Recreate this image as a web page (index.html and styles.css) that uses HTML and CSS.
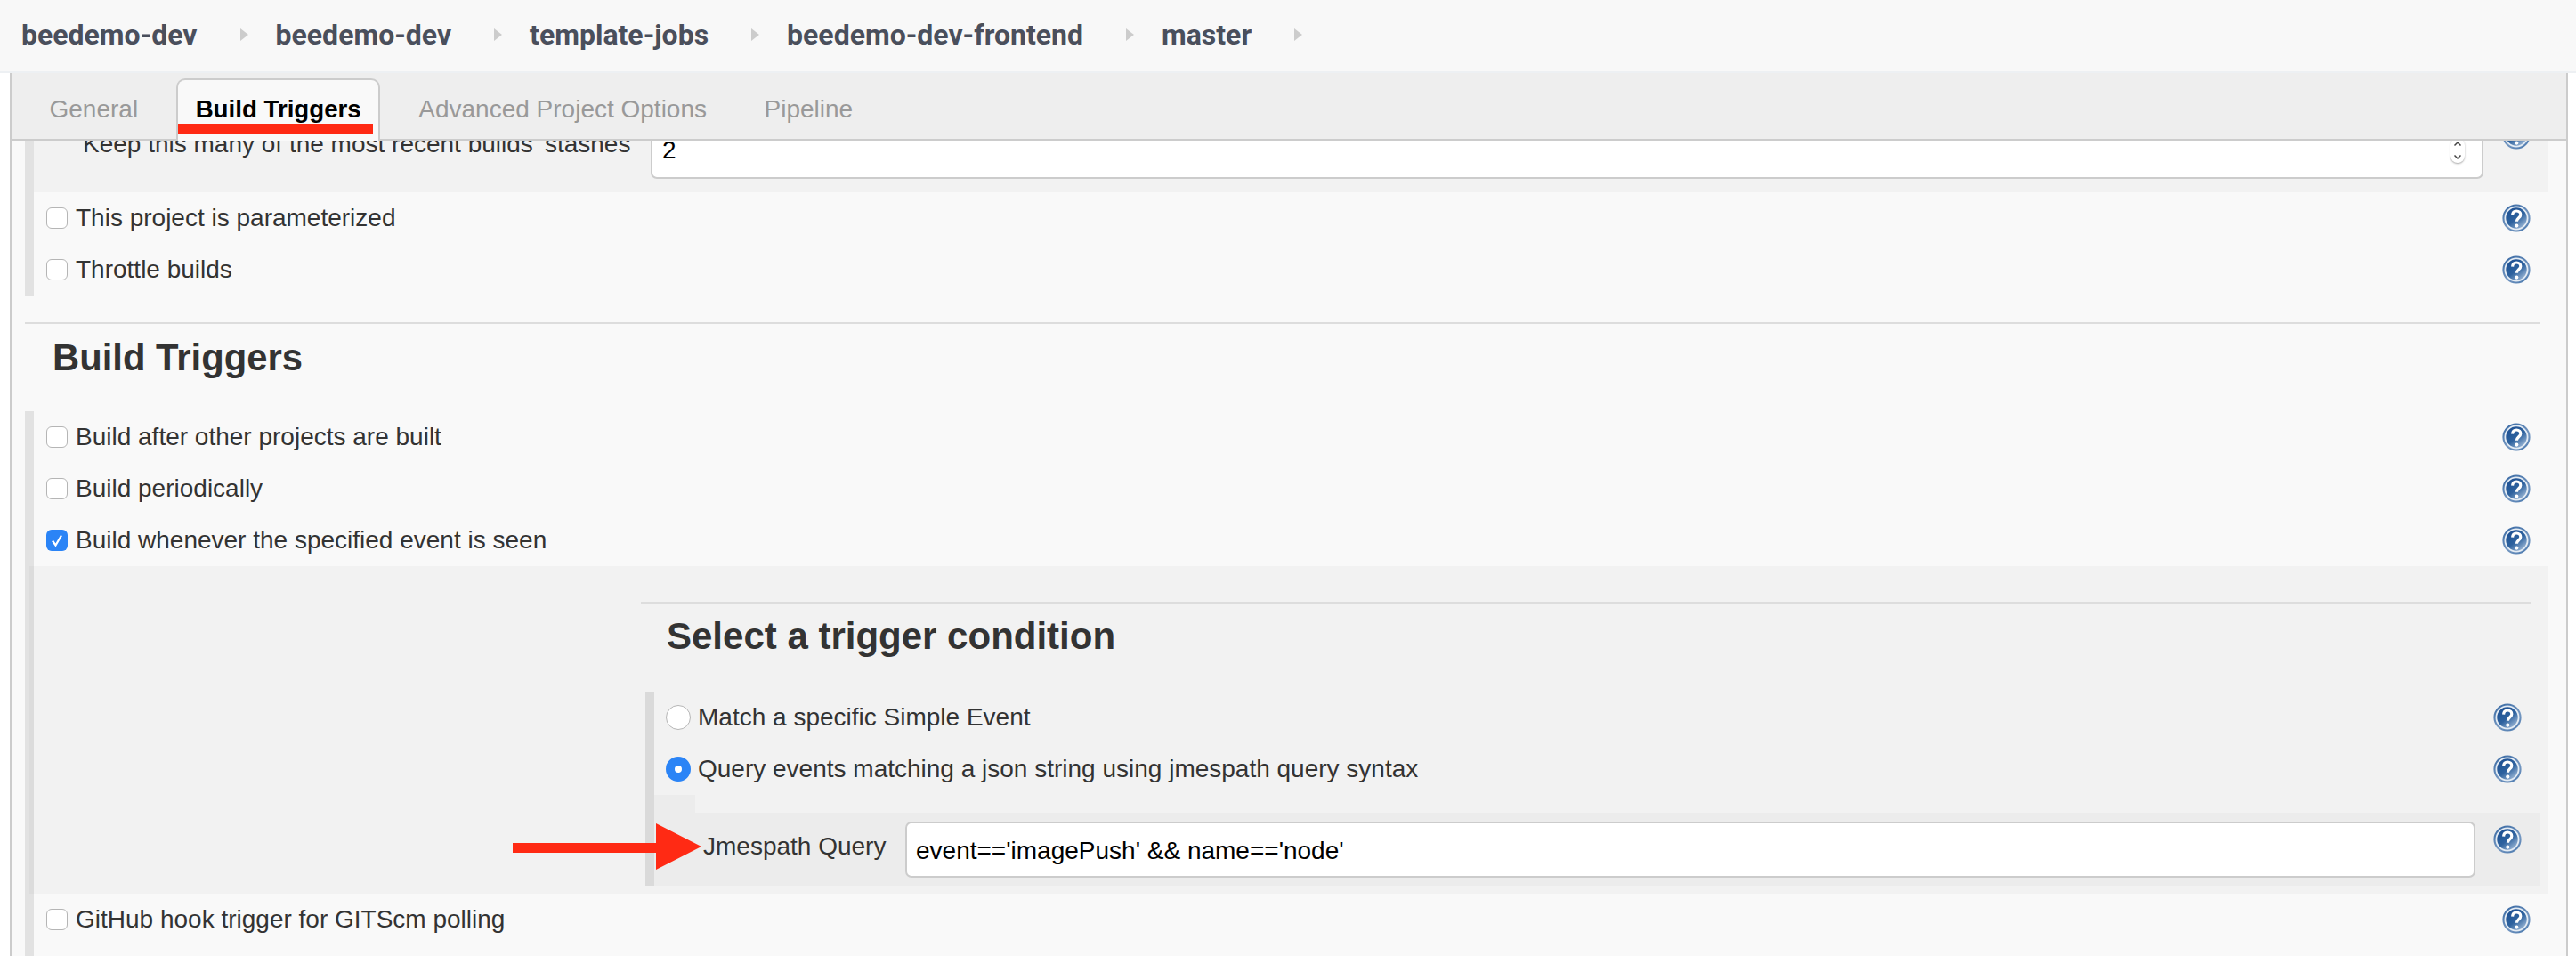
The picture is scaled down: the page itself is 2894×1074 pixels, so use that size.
FILE: index.html
```html
<!DOCTYPE html>
<html lang="en">
<head>
<meta charset="utf-8">
<title>Build Triggers</title>
<link rel="stylesheet" href="styles.css">
</head>
<body>
<svg class="defs" width="0" height="0" aria-hidden="true">
  <defs>
    <linearGradient id="helpRim" x1="0.2" y1="0" x2="0.8" y2="1">
      <stop offset="0" stop-color="#3a6aa4"/>
      <stop offset="0.6" stop-color="#7799c2"/>
      <stop offset="1" stop-color="#4d7aaf"/>
    </linearGradient>
    <linearGradient id="helpCore" x1="0.2" y1="0.1" x2="0.85" y2="0.95">
      <stop offset="0" stop-color="#1f5193"/>
      <stop offset="0.5" stop-color="#2f639f"/>
      <stop offset="1" stop-color="#a8c0dc"/>
    </linearGradient>
    <filter id="helpSoft" x="-5%" y="-5%" width="110%" height="110%">
      <feGaussianBlur stdDeviation="0.4"/>
    </filter>
    <symbol id="help" viewBox="0 0 32 32">
      <g filter="url(#helpSoft)">
        <circle cx="16" cy="16" r="15.600" fill="url(#helpRim)"/>
        <circle cx="16" cy="16" r="12.600" fill="url(#helpCore)" stroke="#e4ecf4" stroke-width="1.800"/>
        <path d="M11.600 12.600C11.800 9.200 14 8 16.200 8c2.800 0 4.600 1.700 4.600 4.200 0 3.600-4.400 3.600-4.400 7.600" fill="none" stroke="#fff" stroke-width="3.200"/>
        <circle cx="16.300" cy="24.600" r="2.100" fill="#fff"/>
      </g>
    </symbol>
  </defs>
</svg>

<nav class="crumbs">
  <a class="crumb">beedemo-dev</a><span class="sep"></span>
  <a class="crumb">beedemo-dev</a><span class="sep"></span>
  <a class="crumb">template-jobs</a><span class="sep"></span>
  <a class="crumb">beedemo-dev-frontend</a><span class="sep"></span>
  <a class="crumb">master</a><span class="sep"></span>
</nav>

<main class="panel">
  <div class="tabbar">
    <span class="tab">General</span>
    <span class="tab tab-active">Build Triggers<i class="underline"></i></span>
    <span class="tab">Advanced Project Options</span>
    <span class="tab">Pipeline</span>
  </div>

  <div class="content">
    <section class="list list-first">
      <div class="keep-row">
        <span class="keep-label">Keep this many of the most recent builds' stashes</span>
        <div class="field field-number">2<span class="spinner"><svg width="10" height="22" viewBox="0 0 10 22"><path d="M1.500 5.500 5 2l3.500 3.500M1.500 16.500 5 20l3.500-3.500" fill="none" stroke="#444" stroke-width="1.500"/></svg></span></div>
        <svg class="help"><use href="#help"/></svg>
      </div>
      <div class="row"><span class="check"></span><span>This project is parameterized</span><svg class="help"><use href="#help"/></svg></div>
      <div class="row"><span class="check"></span><span>Throttle builds</span><svg class="help"><use href="#help"/></svg></div>
    </section>

    <hr class="rule">
    <h2 class="title">Build Triggers</h2>

    <section class="list list-last">
      <div class="row"><span class="check"></span><span>Build after other projects are built</span><svg class="help"><use href="#help"/></svg></div>
      <div class="row"><span class="check"></span><span>Build periodically</span><svg class="help"><use href="#help"/></svg></div>
      <div class="row"><span class="check check-on"><svg width="24" height="24" viewBox="0 0 24 24"><path d="M7 12.500l3.500 5L17 6.500" fill="none" stroke="#fff" stroke-width="2.200"/></svg></span><span>Build whenever the specified event is seen</span><svg class="help"><use href="#help"/></svg></div>

      <div class="expanded">
        <div class="inner">
          <hr class="rule rule-inner">
          <h2 class="title title-inner">Select a trigger condition</h2>
          <div class="radios">
            <div class="row row-radio"><span class="radio"></span><span>Match a specific Simple Event</span><svg class="help"><use href="#help"/></svg></div>
            <div class="row row-radio"><span class="radio radio-on"></span><span>Query events matching a json string using jmespath query syntax</span><svg class="help"><use href="#help"/></svg></div>
            <div class="stub"></div>
            <div class="query-row">
              <svg class="arrow" width="212" height="52" viewBox="0 0 212 52"><path d="M0 22h161V0l51 26-51 26V33H0z" fill="#ff2a14"/></svg>
              <span class="query-label">Jmespath Query</span>
              <div class="field field-query">event=='imagePush' &amp;&amp; name=='node'</div>
              <svg class="help"><use href="#help"/></svg>
            </div>
          </div>
        </div>
      </div>

      <div class="row"><span class="check"></span><span>GitHub hook trigger for GITScm polling</span><svg class="help"><use href="#help"/></svg></div>
    </section>
  </div>
</main>
</body>
</html>
```

FILE: styles.css
```css
* { box-sizing: border-box; }

html, body {
  height: 100%;
  margin: 0;
  overflow: hidden;
  background: #fff;
}

body {
  font-family: "Liberation Sans", Arial, sans-serif;
  font-size: 28px;
  color: #333;
}

.defs { position: absolute; }

/* Breadcrumb */
.crumbs {
  display: flex;
  align-items: center;
  height: 82px;
  padding: 0 0 2px 24px;
  background: #f8f8f8;
  border-bottom: 2px solid #edf0f3;
}

.crumb {
  font-family: Roboto, "Liberation Sans", sans-serif;
  font-weight: 700;
  font-size: 32px;
  color: #4a4f5c;
}

.sep {
  width: 0;
  height: 0;
  margin: 0 31px 0 48px;
  border-left: 9px solid #ccc;
  border-top: 7px solid transparent;
  border-bottom: 7px solid transparent;
}

/* Panel */
.panel {
  height: 992px;
  margin: 0 9px 0 11px;
  border-left: 2px solid #ccc;
  border-right: 2px solid #ccc;
  background: #f9f9f9;
  overflow: hidden;
}

.tabbar {
  position: relative;
  z-index: 2;
  display: flex;
  align-items: flex-end;
  gap: 21.500px;
  height: 76px;
  padding-left: 21px;
  background: #eee;
  border-bottom: 2px solid #ccc;
}

.tab {
  position: relative;
  height: 70px;
  margin-bottom: -2px;
  padding: 17px 19.500px 0;
  border: 2px solid transparent;
  border-bottom: 0;
  border-radius: 10px 10px 0 0;
  line-height: 32px;
  white-space: nowrap;
  color: #999;
}

.tab-active {
  background: #f9f9f9;
  border-color: #ccc;
  color: #000;
  font-size: 27.700px;
  font-weight: 700;
}

.underline {
  position: absolute;
  left: 0;
  top: 49px;
  width: 219px;
  height: 11px;
  background: #ff2a14;
}

/* Content */
.content {
  padding: 0 20px 0 15px;
}

.list {
  border-left: 10px solid #e2e2e2;
}

.list-first {
  margin-top: -30px;
}

.keep-row {
  display: flex;
  align-items: flex-start;
  height: 88px;
  padding: 10px 20px 0 0;
  background: #f2f2f2;
}

.keep-label {
  width: 693px;
  padding: 8px 0 0 55px;
  line-height: 32px;
  white-space: nowrap;
}

.field {
  display: flex;
  align-items: center;
  height: 63px;
  padding: 0 10px;
  background: #fff;
  border: 2px solid #ccc;
  border-radius: 7px;
  color: #000;
  white-space: nowrap;
}

.field-number {
  flex: 1;
  margin-right: 21px;
  padding: 0 10px 2px 11px;
  justify-content: space-between;
}

.spinner {
  display: flex;
  align-items: center;
  justify-content: center;
  width: 16px;
  height: 28px;
  margin-right: 9px;
  background: #fff;
  border-radius: 8px;
  box-shadow: 0 1px 2px rgba(0, 0, 0, .35);
}

.help {
  flex: none;
  width: 32px;
  height: 32px;
  margin-left: auto;
}

.keep-row .help { margin-top: -2px; }

.row {
  display: flex;
  align-items: center;
  height: 58px;
  padding: 0 20px 0 14px;
  white-space: nowrap;
}

.check {
  flex: none;
  width: 24px;
  height: 24px;
  margin-right: 9px;
  background: #fff;
  border: 1px solid #b5b5b5;
  border-radius: 6px;
}

.check-on {
  background: #2b84f6;
  border: 0;
}

.check-on svg { display: block; }

.rule {
  height: 2px;
  margin: 30px 10px 0 0;
  border: 0;
  background: #ddd;
}

.title {
  margin: 14px 0 36px;
  padding-left: 31px;
  font-size: 41.800px;
  line-height: 48px;
  font-weight: 700;
  color: #333;
}

.list-last {
  padding-bottom: 12px;
}

.expanded {
  height: 368px;
  margin-left: -5px;
  padding: 40px 0 0 682px;
  background: #f2f2f2;
  border-left: 5px solid #dcdcdc;
}

.rule-inner {
  margin: 0 20px 0 0;
}

.title-inner {
  margin: 13px 0 38px;
  padding-left: 29px;
  font-size: 42px;
}

.radios {
  margin: 0 10px 0 5px;
  border-left: 10px solid #dadada;
}

.row-radio {
  padding: 0 20px 0 13px;
}

.radio {
  flex: none;
  width: 28px;
  height: 28px;
  margin-right: 8px;
  background: #fff;
  border: 1px solid #b5b5b5;
  border-radius: 50%;
}

.radio-on {
  background: #fff;
  border: 10px solid #2b84f6;
}

.stub {
  width: 46px;
  height: 20px;
  background: #ececec;
}

.query-row {
  position: relative;
  display: flex;
  align-items: flex-start;
  height: 82px;
  padding: 10px 20px 0 0;
  background: #ececec;
}

.arrow {
  position: absolute;
  left: -159px;
  top: 12px;
}

.query-label {
  width: 282px;
  padding: 12px 0 0 55px;
  line-height: 32px;
  white-space: nowrap;
}

.field-query {
  flex: 1;
  margin-right: 20px;
  padding-top: 2px;
}

.query-row .help { margin-top: 4px; }
```
